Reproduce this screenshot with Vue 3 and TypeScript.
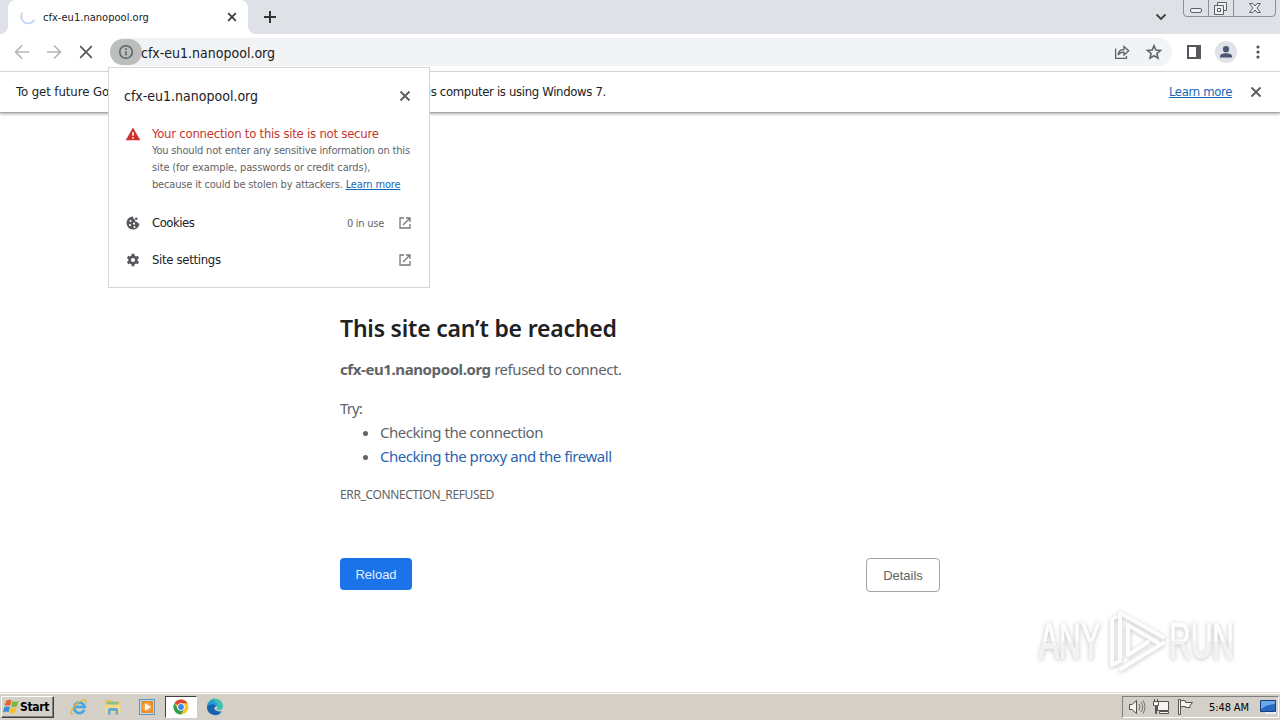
<script setup lang="ts">
import { ref } from 'vue'

const host = ref<string>('cfx-eu1.nanopool.org')
const suggestions = [
  { text: 'Checking the connection', link: false },
  { text: 'Checking the proxy and the firewall', link: true },
]
</script>

<template>
  <div class="screen">
    <header class="tabstrip">
      <div class="edge"><i></i></div>
      <div class="tab">
        <svg class="spinner" width="16" height="16" viewBox="0 0 16 16"><path d="M2.200 3.800A7 7 0 0 0 14.300 11" /></svg>
        <span class="tab-title">{{ host }}</span>
        <svg class="tab-x" width="10" height="10" viewBox="0 0 10 10"><path d="M1.200 1.200 8.800 8.800M8.800 1.200 1.200 8.800" /></svg>
      </div>
      <div class="edge right"><i></i></div>
      <svg class="plus" width="12" height="12" viewBox="0 0 12 12"><path d="M6 0V12M0 6H12" /></svg>
      <svg class="chev" width="12" height="8" viewBox="0 0 12 8"><path d="M1.500 1.500 6 6 10.500 1.500" /></svg>
      <svg class="winctl" width="94" height="18" viewBox="0 0 94 18">
        <path class="frame" d="M.5 0V13Q.5 16.500 4 16.500H89Q92.500 16.500 92.500 13V0M25.500 0V16M50.500 0V16" />
        <rect x="7.500" y="8.500" width="11" height="4" rx="1.500" />
        <path d="M34.500 5V2.500H43.500V10.500H40.500M31.500 5.500H40.500V14.500H31.500ZM34.500 8.500H37.500V11.500H34.500Z" />
        <path d="M66.500 3.500H70L72 6 74 3.500H77.500L74 8 77.500 12.500H74L72 10 70 12.500H66.500L70 8Z" />
      </svg>
    </header>

    <div class="toolbar">
      <svg class="nav dim" width="16" height="16" viewBox="0 0 16 16"><path d="M15 8H2M8 1.500 1.500 8 8 14.500" /></svg>
      <svg class="nav dim" width="16" height="16" viewBox="0 0 16 16"><path d="M1 8H14M8 1.500 14.500 8 8 14.500" /></svg>
      <svg class="nav" width="16" height="16" viewBox="0 0 16 16"><path d="M2.200 2.200 13.800 13.800M13.800 2.200 2.200 13.800" /></svg>
      <div class="omnibox">
        <div class="info">
          <svg width="16" height="16" viewBox="0 0 16 16"><circle cx="8" cy="8" r="6.300" /><path d="M8 7.200V11.500M8 4.300V5.900" /></svg>
        </div>
        <span class="url">{{ host }}</span>
        <svg class="share" width="16" height="16" viewBox="0 0 16 16"><path d="M1.600 4.500V14.400H12.500V12M4 11C4.500 7.500 6.500 5.600 10 5.500V2.500L14.700 6.800 10 11V8.200C7.500 8.100 5.500 9 4 11Z" /></svg>
        <svg class="star" width="16" height="16" viewBox="0 0 16 16"><path d="M8 1.700 9.800 6 14.500 6.400 10.900 9.500 12 14.100 8 11.700 4 14.100 5.100 9.500 1.500 6.400 6.200 6Z" /></svg>
      </div>
      <svg class="panel" width="14" height="14" viewBox="0 0 14 14"><path d="M1 1H13V13H1Z" fill="none" stroke="#54575b" stroke-width="2" /><path d="M9 1H13V13H9Z" fill="#54575b" /></svg>
      <svg class="avatar" width="22" height="22" viewBox="0 0 22 22"><circle cx="11" cy="11" r="11" fill="#dfe2e7" /><circle cx="11" cy="8.200" r="3.100" fill="#4a5672" /><path d="M5 16.500V15.200C5 13 9 12.200 11 12.200S17 13 17 15.200V16.500Z" fill="#4a5672" /></svg>
      <svg class="menu" width="4" height="14" viewBox="0 0 4 14"><circle cx="2" cy="2" r="1.600" /><circle cx="2" cy="7" r="1.600" /><circle cx="2" cy="12" r="1.600" /></svg>
    </div>

    <div class="infobar">
      <span class="notice"><span class="lead">To get future Go</span>ogle Chrome updates, you'll need Windows 10 or later. Th<span class="tail">is computer is using Windows 7.</span></span>
      <a class="more">Learn more</a>
      <svg class="close" width="12" height="12" viewBox="0 0 12 12"><path d="M1.500 1.500 10.500 10.500M10.500 1.500 1.500 10.500" /></svg>
    </div>

    <main class="page">
      <section class="error">
        <h1><span>This site can’t be reached</span></h1>
        <p class="refused"><strong>{{ host }}</strong><span> refused to connect.</span></p>
        <p class="try"><span>Try:</span></p>
        <ul>
          <li v-for="s in suggestions" :key="s.text"><span :class="{ link: s.link }">{{ s.text }}</span></li>
        </ul>
        <p class="code"><span>ERR_CONNECTION_REFUSED</span></p>
        <div class="buttons">
          <button class="reload">Reload</button>
          <button class="details">Details</button>
        </div>
      </section>
    </main>

    <footer class="taskbar">
      <div class="start">
        <svg width="17" height="16" viewBox="0 0 17 16">
          <path d="M3 2Q6-.2 8.500 1.600L7.200 7Q4.500 5.500 1.700 7.200Z" fill="#e8642c" />
          <path d="M9.500 2Q12 3.500 15.500 2L14 7.200Q11 8.800 8.200 7.400Z" fill="#7bb943" />
          <path d="M1.400 8.200Q4.200 6.700 6.900 8L5.500 13.200Q3 11.800 0 13.400Z" fill="#3b8bd0" />
          <path d="M7.900 8.400Q10.700 9.900 13.700 8.300L12.200 13.600Q9 15.200 6.500 13.700Z" fill="#f5bd2f" />
        </svg>
        <b>Start</b>
      </div>
      <div class="apps">
        <div class="app">
          <svg width="18" height="18" viewBox="0 0 18 18"><path d="M14.300 11.800A5.300 5.300 0 1 1 14.600 9H5.500" fill="none" stroke="#45a6e2" stroke-width="2.700" /><path d="M3.500 15.500C-1.500 19 2 9 8 4.800 13 1 17.500.5 15.500 5" fill="none" stroke="#e6b83c" stroke-width="1.500" /></svg>
        </div>
        <div class="app">
          <svg width="18" height="18" viewBox="0 0 18 18"><path d="M1.500 2H7L8 3.500H15.500V14H1.500Z" fill="#e3bd5c" /><path d="M3 4H14V8H3Z" fill="#7cc48c" /><path d="M1 6.500H16.500V14.500H1Z" fill="#f2da86" /><path d="M4 16.500V11.500Q4 10 5.500 10H12.500Q14 10 14 11.500V16.500H11.500V13H6.500V16.500Z" fill="#5facdb" /></svg>
        </div>
        <div class="app">
          <svg width="18" height="18" viewBox="0 0 18 18"><rect x="1.500" y="1.500" width="15" height="15" fill="#b8d9ee" stroke="#6297bb" /><rect x="3.500" y="3" width="11.500" height="12" fill="#f08a24" /><circle cx="9" cy="9" r="4.500" fill="#f5a24c" /><path d="M7 5.200 13 9 7 12.800Z" fill="#fff" /></svg>
        </div>
        <div class="app active">
          <svg width="16" height="16" viewBox="0 0 16 16"><circle cx="8" cy="8" r="7.500" fill="#f9c62d" /><path d="M8 8 1.500 4.250A7.500 7.500 0 0 1 14.500 4.250H8Z" fill="#df4436" /><path d="M1.500 4.250A7.500 7.500 0 0 0 8 15.500L11.250 9.900 8 8 4.700 9.800Z" fill="#2e9e4f" /><circle cx="8" cy="8" r="3.800" fill="#fff" /><circle cx="8" cy="8" r="2.900" fill="#4184f0" /></svg>
        </div>
        <div class="app">
          <svg width="18" height="18" viewBox="0 0 18 18"><path d="M1 9A8 8 0 0 1 17 8C17.300 12 13 13 10.500 11.500 12 9 10.500 7 7.500 7 4 7 1.500 8 1 12Z" fill="#3cc3b1" /><path d="M1 9C1 4 5 1.500 9 1.500 5 4 14 4 11 8 9.500 6.500 4 6 1 9Z" fill="#269bd4" /><path d="M1 9C3 5.500 9 5.500 10.500 8.500 7.500 8.500 7 13 13.500 13.500 15 13.600 16 13 16 13A8 8 0 0 1 1 9Z" fill="#1763ae" /></svg>
        </div>
      </div>
      <div class="tray">
        <svg width="18" height="18" viewBox="0 0 18 18"><path class="w" d="M1.500 6.500H4L8.500 2.500V15.500L4 11.500H1.500Z" /><path class="n" d="M11 6Q13 9 11 12M13 4Q16.500 9 13 14M15 2.500Q19 9 15 15.500" /></svg>
        <svg width="18" height="18" viewBox="0 0 18 18"><path class="w" d="M5.500 3.500H16.500V12.500H5.500ZM7.500 15.500H16.500V13.500H7.500Z" /><path class="w" d="M1.500 3.500H6.500V7.500H4.500V15.500H3.500V7.500H1.500ZM2.500 3V1M5.500 3V1" /></svg>
        <svg width="18" height="18" viewBox="0 0 18 18"><path class="w" d="M2.500 16.500V1.500H4.500V16.500ZM4.500 3Q7 1.500 9.500 3V4.500H16.500L14 7.500V9.500H9.500V8.500Q7 8 4.500 9Z" /></svg>
        <span class="clock">5:48 AM</span>
        <svg class="desk" width="16" height="16" viewBox="0 0 16 16"><path d="M.5 1.500H15.500V12.500H.5Z" fill="#2869c0" stroke="#163f7d" /><path d="M1 2H15V5Q8 5 1 10Z" fill="#6ba9e8" /><path d="M5 13H16V15H5Z" fill="#e4edf5" /></svg>
      </div>
    </footer>

    <aside class="bubble">
      <div class="bubble-head">
        <span class="bubble-host">{{ host }}</span>
        <svg class="close" width="12" height="12" viewBox="0 0 12 12"><path d="M1.500 1.500 10.500 10.500M10.500 1.500 1.500 10.500" /></svg>
      </div>
      <div class="warning">
        <svg width="16" height="14" viewBox="0 0 16 14"><path d="M8 .5 15.300 13.200H.7Z" fill="#d2302a" /><path d="M8 5V8.800M8 10V11.700" stroke="#fff" stroke-width="1.500" /></svg>
        <div>
          <div class="wtitle"><span>Your connection to this site is not secure</span></div>
          <div class="wline"><span class="l1">You should not enter any sensitive information on this</span></div>
          <div class="wline"><span class="l2">site (for example, passwords or credit cards),</span></div>
          <div class="wline"><span class="l3">because it could be stolen by attackers. <a>Learn more</a></span></div>
        </div>
      </div>
      <div class="row cookies">
        <svg width="16" height="16" viewBox="0 0 16 16"><path d="M8 1.500A6.500 6.500 0 1 0 14.500 8.500Q12.500 8.800 12 6.800 9.500 7 9.800 4.300 7.800 4 8 1.500Z" fill="#54575b" /><g fill="#fff"><circle cx="5.500" cy="6" r="1.100" /><circle cx="5" cy="10" r="1.100" /><circle cx="9" cy="8.700" r="1.100" /><circle cx="9.500" cy="12" r="1" /></g><circle cx="11.300" cy="3.800" r="1.300" fill="#54575b" /></svg>
        <span class="name">Cookies</span>
        <span class="count">0 in use</span>
        <svg class="open" width="12" height="12" viewBox="0 0 12 12"><path d="M5 1H1V11H11V7M7 1H11V5M11 1 4 8" /></svg>
      </div>
      <div class="row settings">
        <svg width="16" height="16" viewBox="0 0 16 16"><circle cx="8" cy="8" r="3.400" fill="none" stroke="#54575b" stroke-width="2.600" /><path d="M8 1.800V4M8 12V14.200M2.600 4.900 4.500 6M11.500 10 13.400 11.100M2.600 11.100 4.500 10M11.500 6 13.400 4.900" stroke="#54575b" stroke-width="2.800" /></svg>
        <span class="name">Site settings</span>
        <svg class="open" width="12" height="12" viewBox="0 0 12 12"><path d="M5 1H1V11H11V7M7 1H11V5M11 1 4 8" /></svg>
      </div>
    </aside>

    <div class="mark">
      <span class="any">ANY</span>
      <svg width="58" height="64" viewBox="0 0 58 64"><path d="M4 10V56M4 10 8 8M12 4V49M12 4 55 28M20 16 50 34M13 60 55 34M4 56 12 52M20 17V46L40 33" /></svg>
      <span class="run">RUN</span>
    </div>
  </div>
</template>

<style>
html, body { margin: 0; overflow: hidden; }
</style>

<style scoped>
.screen { position: relative; width: 1280px; height: 720px; display: flex; flex-direction: column; background: #fff; overflow: hidden; font-family: "DejaVu Sans Condensed", "Noto Sans", sans-serif; font-size: 12px; color: #202124; }
.screen * { box-sizing: border-box; }
.screen span, .screen strong, .screen a, .screen b { white-space: pre; }
svg { flex: none; fill: none; display: block; }
p, h1, ul { margin: 0; padding: 0; }

.tabstrip { height: 34px; flex: none; display: flex; background: #dee1e6; }
.edge { width: 8px; background: #fff; align-self: flex-end; height: 8px; }
.edge i { display: block; height: 8px; background: #dee1e6; border-radius: 0 0 8px 0; }
.edge.right i { border-radius: 0 0 0 8px; }
.tab { width: 240px; background: #fff; border-radius: 8px 8px 0 0; display: flex; align-items: center; padding: 0 11px 0 12px; }
.spinner { stroke: #bfd5f5; stroke-width: 1.8; }
.tab-title { font-size: 11px; margin-left: 7px; flex: 1; letter-spacing: .03px; }
.tab-x { stroke: #36393d; stroke-width: 1.7; }
.plus { margin: 11px 0 0 8px; stroke: #303236; stroke-width: 2; }
.chev { margin: 13px 0 0 879px; stroke: #3c4043; stroke-width: 1.8; }
.winctl { margin-left: 16px; }
.winctl * { fill: #eef0f3; stroke: #5c6066; stroke-width: 1; }
.winctl .frame { fill: none; stroke: #8b8f96; }

.toolbar { height: 38px; flex: none; border-bottom: 1px solid #dadce0; display: flex; align-items: center; padding: 0 0 1px 14px; }
.nav { stroke: #55585c; stroke-width: 1.7; margin-right: 16px; }
.nav.dim { stroke: #b5b7ba; }
.omnibox { width: 1062px; height: 28px; border-radius: 14px; background: #f1f3f4; display: flex; align-items: center; }
.info { width: 32px; height: 26px; border-radius: 13px; background: #bcbebe; display: flex; align-items: center; justify-content: center; }
.info svg { stroke: #5f6368; stroke-width: 1.6; }
.url { font-size: 14px; flex: 1; margin-left: -1px; padding-top: 1px; }
.share, .star { stroke: #5f6368; stroke-width: 1.3; }
.star { margin: 0 10px 0 16px; stroke-width: 1.6; }
.panel { margin-left: 15px; }
.avatar { margin-left: 14px; }
.menu { margin-left: 19px; fill: #4f5256; }

.infobar { height: 41px; flex: none; display: flex; align-items: center; padding-left: 16px; border-bottom: 1px solid #a8a8a8; box-shadow: 0 1px 3px #aaa; }
.notice { font-size: 13px; flex: 1; letter-spacing: -.36px; padding-bottom: 2px; }
.lead { letter-spacing: -.05px; }
.tail { letter-spacing: -.34px; }
.more { color: #1a67b8; text-decoration: underline; font-size: 13px; letter-spacing: -.35px; padding-bottom: 2px; }
.close { stroke: #5a5d61; stroke-width: 1.9; }
.infobar .close { margin: 0 18px; }

.page { flex: 1; display: flex; justify-content: center; font-family: "Noto Sans", sans-serif; color: #5f6368; }
.error { width: 600px; padding-top: 197px; }
h1 { font-size: 23px; line-height: 36px; font-weight: 600; color: #202124; letter-spacing: -.2px; }
.refused { font-size: 15px; line-height: 24px; margin-top: 11px; letter-spacing: -.45px; }
.refused strong { letter-spacing: -.4px; }
.try { font-size: 15px; line-height: 24px; margin-top: 15px; letter-spacing: -.9px; }
ul { padding-left: 40px; }
li { font-size: 15px; line-height: 24px; letter-spacing: -.47px; }
.link { color: #2a64b0; }
.code { font-size: 12px; line-height: 20px; margin-top: 17px; letter-spacing: -.36px; }
.buttons { display: flex; justify-content: space-between; align-items: flex-start; margin-top: 53px; }
button { font: 13px "Liberation Sans", sans-serif; padding: 0; border-radius: 4px; }
.reload { width: 72px; height: 32px; background: #1a73e8; border: 0; color: #e4f0ff; }
.details { width: 74px; height: 34px; background: #fff; border: 1px solid #a0a3a7; color: #5f6368; }

.taskbar { height: 28px; flex: none; background: #d4d0c8; border-top: 1px solid #dedbd5; box-shadow: inset 0 1px #fff; display: flex; align-items: center; padding-bottom: 1px; }
.start { width: 53px; height: 22px; margin: 1px 0 0 1px; display: flex; align-items: center; border: 1px solid; border-color: #fff #404040 #404040 #fff; box-shadow: inset -1px -1px #808080; padding-left: 1px; color: #000; }
.start b { font-size: 12px; letter-spacing: -.3px; }
.apps { display: flex; margin: 1px 0 0 8px; }
.app { width: 34px; height: 22px; display: flex; align-items: center; justify-content: center; }
.app.active { width: 32px; margin: 0 1px; background: #fff; border: 1px solid; border-color: #404040 #fff #fff #404040; }
.tray { margin: 1px 1px 0 auto; width: 157px; height: 22px; border: 1px solid; border-color: #808080 #fff #fff #808080; display: flex; align-items: center; gap: 6px; padding-left: 5px; color: #000; }
.tray .w { fill: #f6f5f2; stroke: #55534f; }
.tray .n { stroke: #77746e; }
.clock { font-size: 11px; margin-left: 9px; letter-spacing: -.1px; padding-top: 1px; }
.desk { margin-left: auto; margin-right: 2px; }

.bubble { position: absolute; left: 108px; top: 67px; width: 322px; height: 221px; background: #fff; border: 1px solid #d6d7d9; padding: 16px 18px 0 15px; }
.bubble-head { display: flex; align-items: center; justify-content: space-between; height: 24px; }
.bubble-host { font-size: 14px; }
.warning { display: flex; gap: 11px; margin-top: 17px; padding-left: 1px; color: #5f6368; }
.warning > svg { margin-top: 2px; }
.wtitle { font-size: 13px; line-height: 17px; height: 17px; color: #c5352d; letter-spacing: -.24px; }
.wline { font-size: 11px; line-height: 17px; height: 17px; letter-spacing: -.17px; }
.l2 { letter-spacing: -.13px; }
.wline a { color: #1a67b8; text-decoration: underline; }
.row { display: flex; align-items: center; height: 37px; padding-left: 1px; }
.row.cookies { margin-top: 11px; }
.name { margin-left: 11px; font-size: 13px; flex: 1; letter-spacing: -.32px; }
.cookies .name { letter-spacing: -.5px; }
.count { font-size: 11px; color: #5f6368; margin-right: 15px; letter-spacing: -.25px; padding-top: 1px; }
.open { stroke: #75787c; stroke-width: 1.3; }

.mark { position: absolute; left: 1039px; top: 609px; width: 200px; height: 64px; display: flex; align-items: center; filter: drop-shadow(0 1px 2px #c4c4c4); font: 400 50px/64px "Liberation Sans", sans-serif; }
.mark span { flex: none; transform-origin: 0 50%; transform: scaleX(.6); color: transparent; background: linear-gradient(#fff 50%, #f1f1f1 50%); background-clip: text; -webkit-text-stroke: 1px #f8f8f8; }
.any { width: 112px; margin-right: -43px; }
.run { width: 112px; margin-left: 3px; }
.mark svg { stroke: #fdfdfd; stroke-width: 4; stroke-linejoin: round; stroke-linecap: round; }
</style>
